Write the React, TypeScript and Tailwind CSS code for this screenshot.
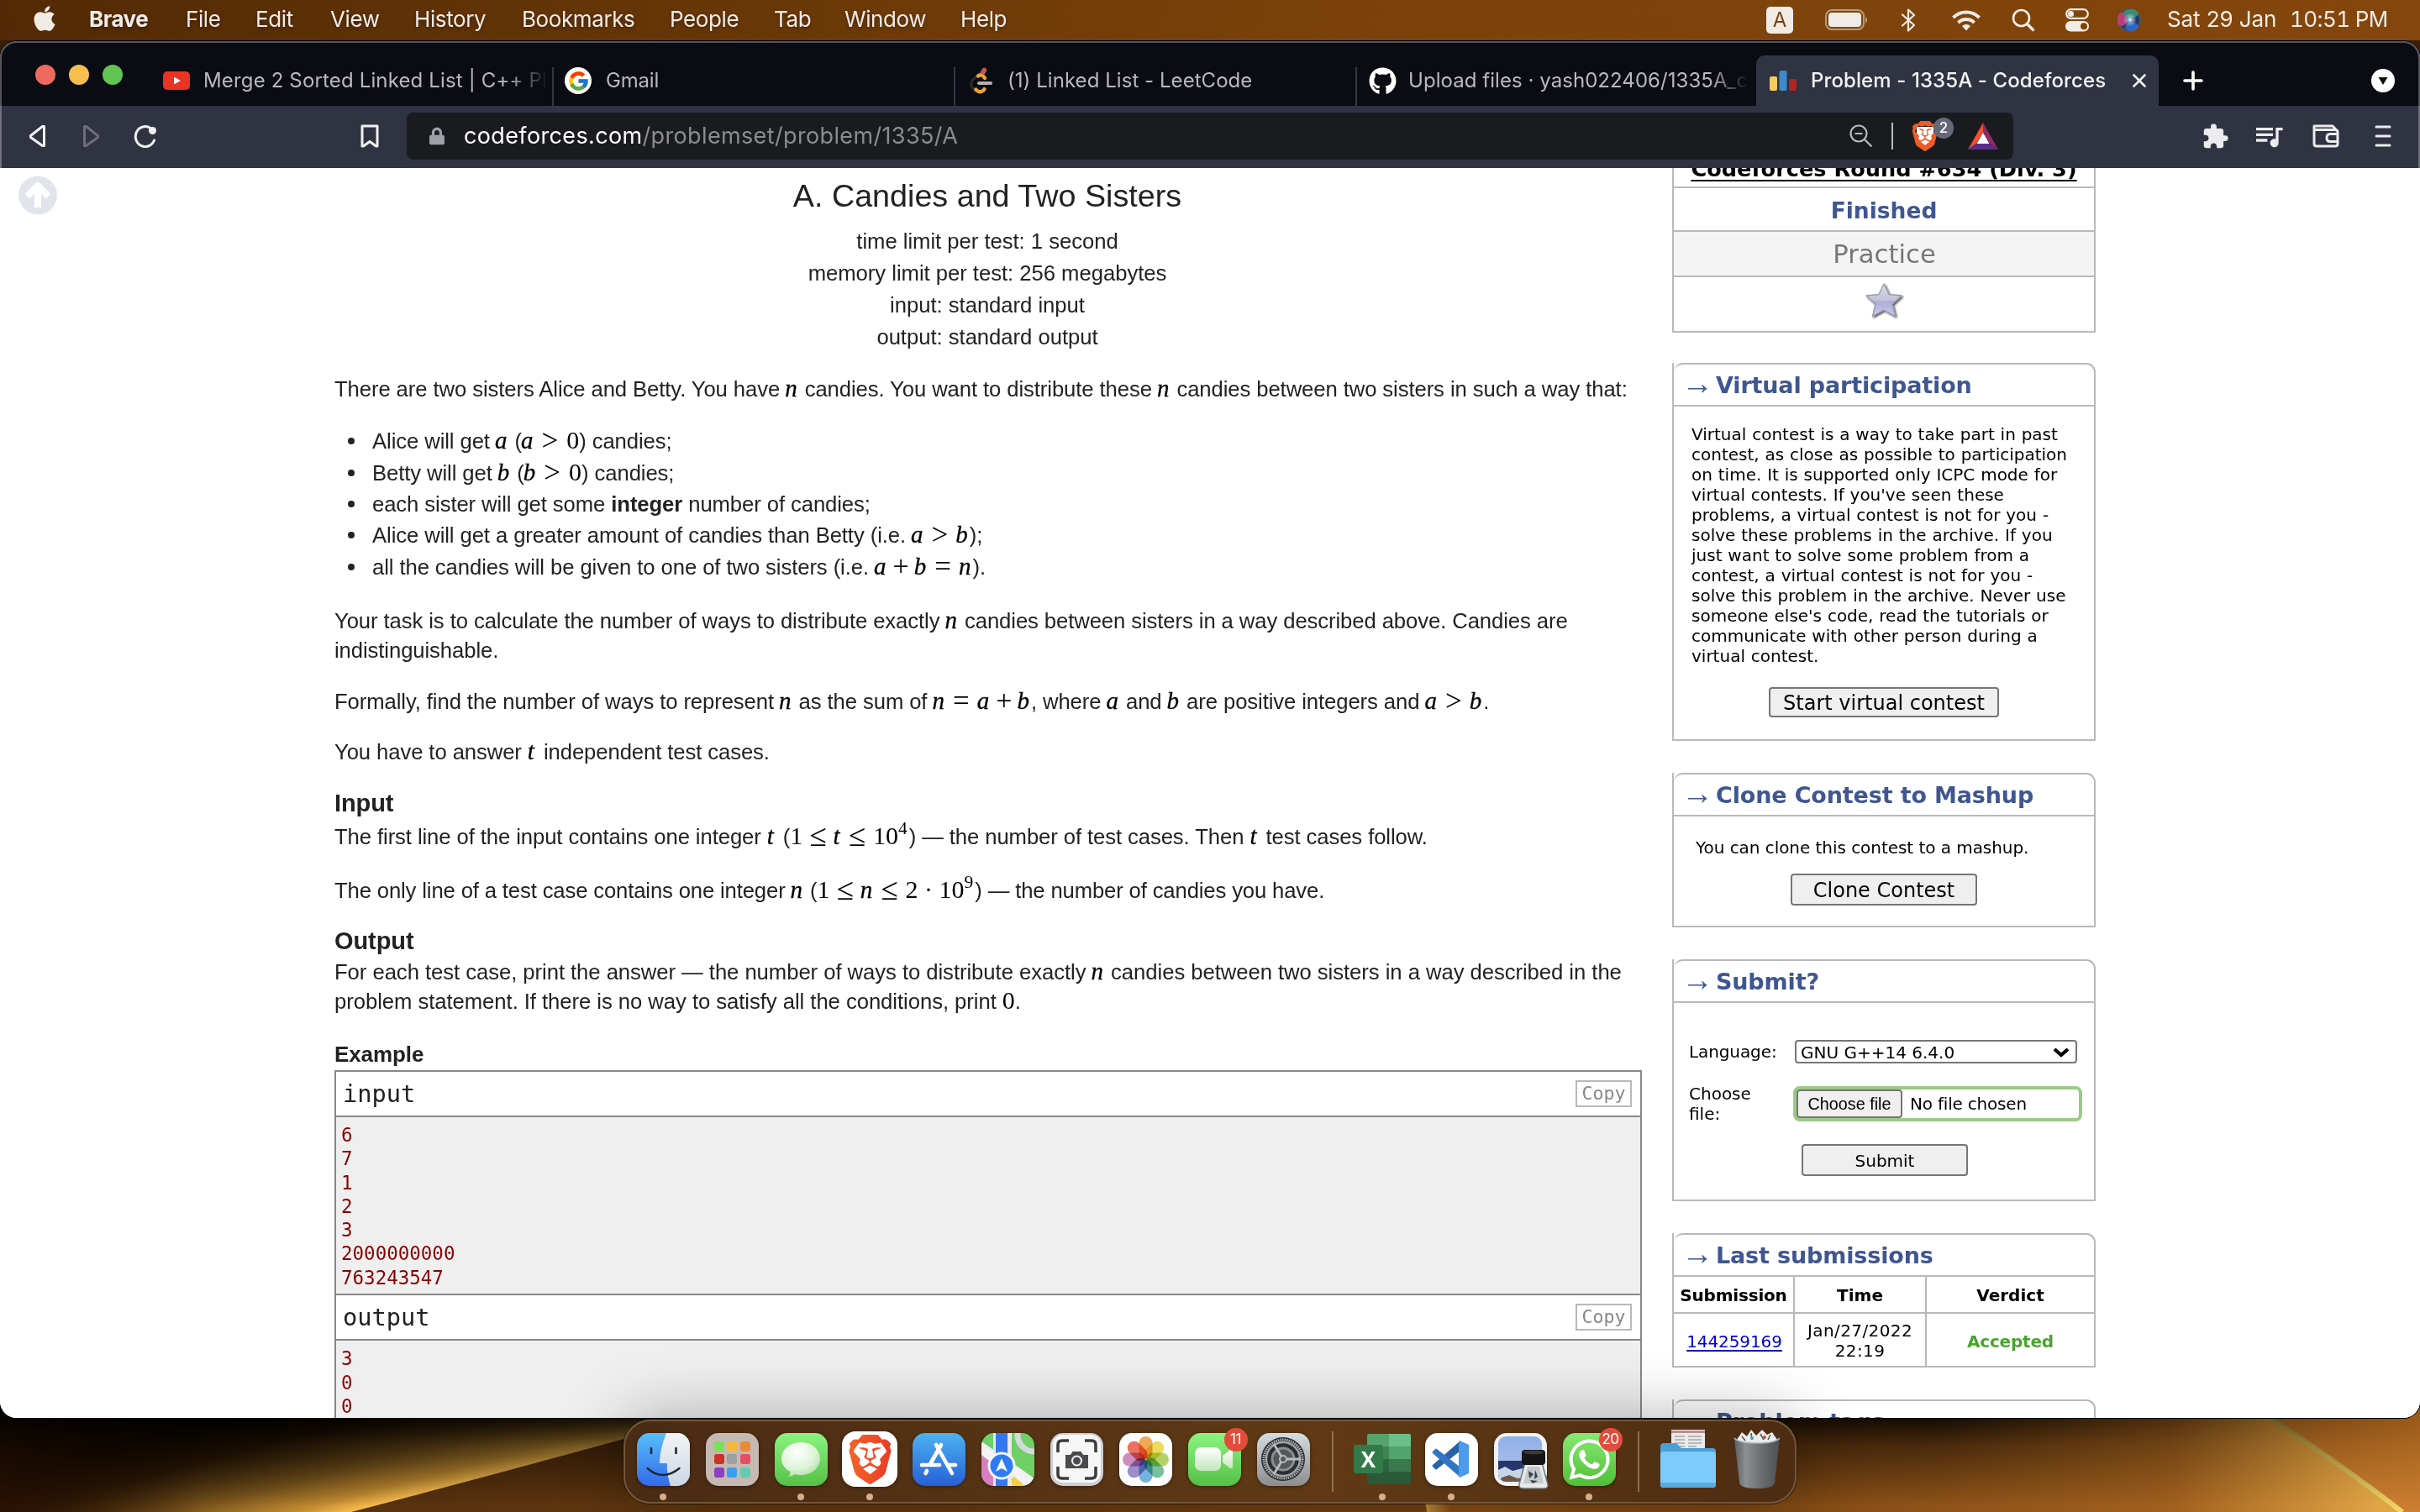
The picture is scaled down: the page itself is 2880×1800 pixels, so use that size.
import React from "react";
import { FaApple, FaGithub, FaWhatsapp, FaLock } from "react-icons/fa";
import { FcGoogle } from "react-icons/fc";
import { SiBrave } from "react-icons/si";
import { MdExtension, MdQueueMusic } from "react-icons/md";

const UI = "font-['Inter',sans-serif]";
const VERDANA = "font-['DejaVu_Sans',sans-serif]";
const MONO = "font-['DejaVu_Sans_Mono',monospace]";

/* ---------- Menu bar ---------- */

const menus = [
  { label: "Brave", cls: "w-[115px] font-bold tracking-[-0.5px]" },
  { label: "File", cls: "w-[83px]" },
  { label: "Edit", cls: "w-[89px]" },
  { label: "View", cls: "w-[100px]" },
  { label: "History", cls: "w-[128px]" },
  { label: "Bookmarks", cls: "w-[176px]" },
  { label: "People", cls: "w-[124px]" },
  { label: "Tab", cls: "w-[84px]" },
  { label: "Window", cls: "w-[138px]" },
  { label: "Help", cls: "w-[80px]" },
];

function MenuBar() {
  return (
    <div className={`relative flex h-[48px] shrink-0 items-center bg-gradient-to-r from-[#532a05] via-[#7a420a] via-55% to-[#84460c] text-[26px] text-[#f1ebe6] ${UI}`}>
      <FaApple className="mb-[4px] ml-[38px] h-[34px] w-[30px] shrink-0" />
      <div className="ml-[38px] flex pb-[3px] tracking-[-0.4px] whitespace-nowrap [text-shadow:0_2px_4px_rgba(0,0,0,0.35)]">
        {menus.map((m) => (
          <span key={m.label} className={m.cls}>{m.label}</span>
        ))}
      </div>
      <div className="ml-auto flex items-center pr-[37px]">
        <span className="flex h-[32px] w-[32px] items-center justify-center rounded-[5px] bg-[#f1ebe6] text-[24px] text-[#7a420a]">A</span>
        <svg className="ml-[38px]" width="52" height="26" viewBox="0 0 52 26">
          <rect x="1" y="1" width="45" height="23" rx="7" fill="none" stroke="#f1ebe6" strokeOpacity=".5" strokeWidth="2" />
          <rect x="4" y="4" width="39" height="17" rx="4" fill="#f1ebe6" />
          <path d="M48 9q4 3.500 0 8z" fill="#f1ebe6" fillOpacity=".6" />
        </svg>
        <svg className="ml-[38px]" width="18" height="28" viewBox="0 0 18 28" fill="none" stroke="#f1ebe6" strokeWidth="2.200" strokeLinejoin="round" strokeLinecap="round">
          <path d="M2 7.500l14 12.500-7 6.500V1.500l7 6.500L2 20.500" />
        </svg>
        <svg className="ml-[43px]" width="34" height="25" viewBox="0 0 34 25" fill="none" stroke="#f1ebe6" strokeWidth="4">
          <path d="M1.500 9a22 22 0 0 1 31 0" />
          <path d="M7.500 15a13.500 13.500 0 0 1 19 0" />
          <path d="M12 19a7 7 0 0 1 10 0l-5 5.500z" fill="#f1ebe6" stroke="none" />
        </svg>
        <svg className="ml-[37px]" width="28" height="28" viewBox="0 0 28 28" fill="none" stroke="#f1ebe6" strokeWidth="2.600" strokeLinecap="round">
          <circle cx="11.500" cy="11.500" r="9.500" />
          <path d="M18.500 18.500l7 7" strokeWidth="3.200" />
        </svg>
        <svg className="ml-[36px]" width="28" height="28" viewBox="0 0 28 28">
          <rect x="1.200" y="1.200" width="25.600" height="10.600" rx="5.300" fill="none" stroke="#f1ebe6" strokeWidth="2.200" />
          <circle cx="6.500" cy="6.500" r="3.600" fill="#f1ebe6" />
          <rect x="0" y="15" width="28" height="12.500" rx="6.200" fill="#f1ebe6" />
          <circle cx="22" cy="21.200" r="4" fill="#7f440c" />
        </svg>
        <svg className="mb-[1px] ml-[34px]" width="28" height="28" viewBox="0 0 28 28">
          <defs>
            <radialGradient id="siriBase"><stop offset="0" stopColor="#2a4a86" /><stop offset=".7" stopColor="#22305e" /><stop offset="1" stopColor="#47606f" /></radialGradient>
            <radialGradient id="siriGlow"><stop offset="0" stopColor="#fff" /><stop offset=".35" stopColor="#bfe6f5" stopOpacity=".6" /><stop offset="1" stopColor="#bfe6f5" stopOpacity="0" /></radialGradient>
            <clipPath id="siriClip"><circle cx="14" cy="14" r="14" /></clipPath>
          </defs>
          <g clipPath="url(#siriClip)">
            <circle cx="14" cy="14" r="14" fill="url(#siriBase)" />
            <ellipse cx="5" cy="13" rx="6" ry="8" fill="#d43f7d" opacity=".85" />
            <ellipse cx="16" cy="6" rx="9" ry="5" fill="#3c9a78" opacity=".85" />
            <ellipse cx="17" cy="22" rx="8" ry="5" fill="#2f6fd0" opacity=".85" />
            <circle cx="15" cy="13.500" r="8" fill="url(#siriGlow)" />
          </g>
        </svg>
        <span className="ml-[31px] w-[146px] pb-[3px] tracking-[-0.1px] whitespace-nowrap">Sat 29 Jan</span>
        <span className="w-[118px] pb-[3px] tracking-[-0.6px] whitespace-nowrap tabular-nums">10:51 PM</span>
      </div>
    </div>
  );
}

/* ---------- Browser chrome ---------- */

function TabStrip() {
  const fade = "whitespace-nowrap [mask-image:linear-gradient(to_right,black_88%,transparent)]";
  return (
    <div className={`flex h-[77px] shrink-0 items-end bg-[#0b0b14] text-[24px] text-[#b9b9bc] ${UI}`}>
      <div className="mb-[25px] ml-[42px] flex h-[24px] gap-[16px]">
        <span className="size-[24px] rounded-full bg-[#ed6a5f]" />
        <span className="size-[24px] rounded-full bg-[#f5bf4f]" />
        <span className="size-[24px] rounded-full bg-[#61c554]" />
      </div>
      <div className="ml-[48px] flex h-[60px] w-[463px] items-center">
        <svg width="32" height="24" viewBox="0 0 32 24"><rect y="1" width="32" height="22" rx="5" fill="#e93323" /><path d="M13 7.500v9l8-4.500z" fill="#fff" /></svg>
        <span className={`ml-[16px] w-[411px] tracking-[0.15px] ${fade}`}>Merge 2 Sorted Linked List | C++ Pla</span>
      </div>
      <div className="flex h-[60px] w-[478px] items-center">
        <span className="mt-[14px] h-[46px] w-[2px] bg-[#35363f]" />
        <span className="ml-[13px] flex size-[32px] items-center justify-center rounded-full bg-white"><FcGoogle size={27} /></span>
        <span className="ml-[17px] tracking-[-0.2px]">Gmail</span>
      </div>
      <div className="flex h-[60px] w-[478px] items-center">
        <span className="mt-[14px] h-[46px] w-[2px] bg-[#35363f]" />
        <svg className="ml-[16px]" width="28" height="32" viewBox="0 0 28 32" fill="none" strokeLinecap="round">
          <path d="M18 2L4 16q-3 4 0 8l4 5" stroke="#2d2c2c" strokeWidth="3" />
          <path d="M11 10.500q4-3 7 1l1 1.500M8.500 26.500q4 5 9 1l1-1.500" stroke="#e9a33b" strokeWidth="4.200" />
          <path d="M18.500 3.500l-1.500 2.500" stroke="#c85749" strokeWidth="5.500" />
          <path d="M12 19h14" stroke="#b3b1b0" strokeWidth="4" />
        </svg>
        <span className="ml-[18px] whitespace-nowrap tracking-[0.05px]">(1) Linked List - LeetCode</span>
      </div>
      <div className="flex h-[60px] w-[477px] items-center">
        <span className="mt-[14px] h-[46px] w-[2px] bg-[#35363f]" />
        <FaGithub className="ml-[14px] size-[33px] text-white" />
        <span className={`ml-[14px] w-[406px] tracking-[0.05px] ${fade}`}>Upload files · yash022406/1335A_c</span>
      </div>
      <div className="flex h-[60px] w-[479px] items-center rounded-t-[10px] bg-[#303342] text-[#f3f3f4]">
        <svg className="ml-[16px]" width="32" height="26" viewBox="0 0 32 26">
          <rect x="0" y="8" width="9" height="17" rx="2" fill="#f3cd62" />
          <rect x="11.500" y="1" width="9" height="24" rx="2" fill="#3f8acb" />
          <rect x="23" y="11" width="9" height="14" rx="2" fill="#ad2624" />
        </svg>
        <span className="ml-[17px] w-[366px] font-medium tracking-[0.1px] whitespace-nowrap">Problem - 1335A - Codeforces</span>
        <svg className="ml-[17px]" width="16" height="16" viewBox="0 0 16 16" stroke="#f3f3f4" strokeWidth="2.600" strokeLinecap="round"><path d="M1.500 1.500l13 13M14.500 1.500l-13 13" /></svg>
      </div>
      <svg className="mb-[18px] ml-[29px]" width="24" height="24" viewBox="0 0 24 24" stroke="#fff" strokeWidth="3.600" strokeLinecap="round"><path d="M12 2v20M2 12h20" /></svg>
      <svg className="mb-[16px] ml-[200px]" width="28" height="28" viewBox="0 0 28 28"><circle cx="14" cy="14" r="14" fill="#fff" /><path d="M8.500 10h11L14 19z" fill="#0b0b14" /></svg>
    </div>
  );
}

function Toolbar() {
  return (
    <div className={`flex h-[74px] shrink-0 items-center bg-[#303342] pb-[2px] ${UI}`}>
      <svg className="ml-[34px]" width="21" height="28" viewBox="0 0 21 28" fill="none" stroke="#f0f0f2" strokeWidth="3" strokeLinejoin="round"><path d="M18.500 2.500v23h-2L2.500 15.500v-2L16.500 2.500z" /></svg>
      <svg className="ml-[43px]" width="21" height="28" viewBox="0 0 21 28" fill="none" stroke="#6b6d77" strokeWidth="3" strokeLinejoin="round"><path d="M2.500 2.500v23h2l14-10v-2L4.500 2.500z" /></svg>
      <svg className="ml-[39px]" width="30" height="28" viewBox="0 0 30 28" fill="none" stroke="#f0f0f2" strokeWidth="3" strokeLinecap="round"><path d="M21 4.500A11.500 12 0 1 0 25.500 19" /><circle cx="23.500" cy="7.500" r="4.500" fill="#f0f0f2" stroke="none" /></svg>
      <svg className="ml-[241px]" width="22" height="28" viewBox="0 0 22 28" fill="none" stroke="#f0f0f2" strokeWidth="3" strokeLinejoin="round"><path d="M2 2h18v24h-1.500L11 20.500 3.500 26H2z" /></svg>
      <div className="ml-[33px] flex h-[56px] w-[1912px] items-center rounded-[8px] bg-[#1a1b1f]">
        <FaLock className="ml-[27px] h-[22px] w-[18px] text-[#9aa0a6]" />
        <span className="ml-[23px] pt-[1px] text-[27px] tracking-[0.36px] whitespace-nowrap text-[#8b8c90]">
          <span className="text-white">codeforces.com</span>/problemset/problem/1335/A
        </span>
        <svg className="mr-[22px] ml-auto" width="28" height="28" viewBox="0 0 28 28" fill="none" stroke="#b9babd" strokeWidth="2.200"><circle cx="11" cy="11" r="9.500" /><path d="M6.500 11h9M18 18l8.500 8.500" /></svg>
        <span className="h-[32px] w-[2px] bg-[#b9babd]" />
        <div className="relative ml-[22px] flex h-[38px] w-[32px] items-center justify-center">
          <span className="absolute h-[22px] w-[20px] bg-white" />
          <SiBrave className="relative h-[36px] w-[36px] shrink-0 text-[#ef5b27]" />
          <span className="absolute -top-[3px] -right-[18px] flex h-[25px] w-[24px] items-center justify-center rounded-full bg-[#656977] text-[17px] font-medium text-white">2</span>
        </div>
        <svg className="mr-[18px] ml-[35px]" width="36" height="32" viewBox="0 0 36 32">
          <path d="M18 0v12l-8 13L0 32z" fill="#f0502f" />
          <path d="M18 0l18 32-10-7-8-13z" fill="#8f2a62" />
          <path d="M0 32l10-7h16l10 7z" fill="#5a2d88" />
          <path d="M18 12l7.500 13h-15z" fill="#fff" />
        </svg>
      </div>
      <MdExtension className="ml-[224px] size-[33px] text-[#ececee]" />
      <MdQueueMusic className="ml-[27px] size-[40px] text-[#ececee]" />
      <svg className="ml-[32px]" width="32" height="28" viewBox="0 0 32 28" fill="none" stroke="#ececee" strokeWidth="3" strokeLinejoin="round">
        <path d="M2 2h22l4 4.500H2zM2 3v20q0 3 3 3h22q3 0 3-3V9.500q0-3-3-3" />
        <path d="M30 11.500h-9q-4 0-4 4.500t4 4.500h9" />
      </svg>
      <svg className="ml-[42px]" width="20" height="26" viewBox="0 0 20 26" stroke="#ececee" strokeWidth="3" strokeLinecap="round"><path d="M2 2h16M2 13h16M2 24h16" /></svg>
    </div>
  );
}

/* ---------- Problem statement ---------- */

const SERIF = "font-['Liberation_Serif',serif] leading-[0] tracking-normal text-black";

/* Upright digits */
function M({ children }: { children: React.ReactNode }) {
  return <span className={`text-[30px] ${SERIF}`}>{children}</span>;
}
/* Italic variable */
function V({ children }: { children: React.ReactNode }) {
  return <i className={`mr-[2px] -ml-[1px] text-[29px] [-webkit-text-stroke:0.3px_black] ${SERIF}`}>{children}</i>;
}
function T() {
  return <i className={`mr-[4px] text-[29px] [-webkit-text-stroke:0.3px_black] ${SERIF}`}>t</i>;
}
/* Relation sign */
function Op({ children }: { children: React.ReactNode }) {
  return <span className={`relative top-[2px] mr-[10px] ml-[8px] text-[35px] ${SERIF}`}>{children}</span>;
}
function Le() {
  return <span className={`relative top-[2px] mr-[9px] ml-[8px] text-[37px] ${SERIF}`}>≤</span>;
}
function Plus() {
  return <span className={`relative top-[1px] mr-[7px] ml-[6px] text-[34px] ${SERIF}`}>+</span>;
}
function Sup({ children }: { children: React.ReactNode }) {
  return <span className={`relative -top-[12px] mr-[2px] text-[21.500px] ${SERIF}`}>{children}</span>;
}

function Bullet({ children, short }: { children: React.ReactNode; short?: boolean }) {
  return (
    <li className={`flex items-center ${short ? "h-[36px] leading-[34px]" : "h-[38px] leading-[38px]"}`}>
      <span className="mr-[21px] ml-[16px] size-[8px] rounded-full bg-[#222]" />
      <span>{children}</span>
    </li>
  );
}

function SampleHead({ children }: { children: React.ReactNode }) {
  return (
    <div className="flex h-[52px] items-center justify-between pr-[10px] pl-[8px]">
      <span className="pt-[2px] text-[28.700px] text-[#222]">{children}</span>
      <span className="flex h-[32px] w-[67px] items-center justify-center border-2 border-[#b9b9b9] text-[21.500px] text-[#888]">Copy</span>
    </div>
  );
}

function Problem() {
  return (
    <main className="w-[1556px] shrink-0 pt-[10px] font-['Liberation_Sans',sans-serif] text-[25.670px] tracking-[-0.09px] whitespace-nowrap text-[#222]">
      <header className="flex flex-col items-center pr-[2px]">
        <h1 className="text-[37.700px] leading-[46px] tracking-normal">A. Candies and Two Sisters</h1>
        <div className="mt-[12px] text-center leading-[38px] tracking-[-0.03px]">
          <p>time limit per test: 1 second</p>
          <p>memory limit per test: 256 megabytes</p>
          <p>input: standard input</p>
          <p>output: standard output</p>
        </div>
      </header>
      <p className="mt-[26px] leading-[34px]">
        There are two sisters Alice and Betty. You have <V>n</V> candies. You want to distribute these <V>n</V> candies between two sisters in such a way that:
      </p>
      <ul className="mt-[26px]">
        <Bullet>Alice will get <V>a</V> (<V>a</V><Op>&gt;</Op><M>0</M>) candies;</Bullet>
        <Bullet>Betty will get <V>b</V> (<V>b</V><Op>&gt;</Op><M>0</M>) candies;</Bullet>
        <Bullet short>each sister will get some <b>integer</b> number of candies;</Bullet>
        <Bullet>Alice will get a greater amount of candies than Betty (i.e. <V>a</V><Op>&gt;</Op><V>b</V>);</Bullet>
        <Bullet>all the candies will be given to one of two sisters (i.e. <V>a</V><Plus /><V>b</V><Op>=</Op><V>n</V>).</Bullet>
      </ul>
      <p className="mt-[28px] leading-[35px]">
        Your task is to calculate the number of ways to distribute exactly <V>n</V> candies between sisters in a way described above. Candies are<br />indistinguishable.
      </p>
      <p className="mt-[26px] leading-[34px]">
        Formally, find the number of ways to represent <V>n</V> as the sum of <V>n</V><Op>=</Op><V>a</V><Plus /><V>b</V>, where <V>a</V> and <V>b</V> are positive integers and <V>a</V><Op>&gt;</Op><V>b</V>.
      </p>
      <p className="mt-[26px] leading-[34px]">You have to answer <T /> independent test cases.</p>
      <h2 className="mt-[27px] text-[29px] leading-[34px] font-bold">Input</h2>
      <p className="mt-[6px] leading-[34px]">
        The first line of the input contains one integer <T /> (<M>1</M><Le /><V>t</V><Le /><M>10</M><Sup>4</Sup>) — the number of test cases. Then <T /> test cases follow.
      </p>
      <p className="mt-[30px] leading-[34px] tracking-[-0.14px]">
        The only line of a test case contains one integer <V>n</V> (<M>1</M><Le /><V>n</V><Le /><M>2 · 10</M><Sup>9</Sup>) — the number of candies you have.
      </p>
      <h2 className="mt-[26px] text-[29px] leading-[34px] font-bold">Output</h2>
      <p className="mt-[3px] leading-[35px] tracking-[-0.05px]">
        For each test case, print the answer — the number of ways to distribute exactly <V>n</V> candies between two sisters in a way described in the<br />
        problem statement. If there is no way to satisfy all the conditions, print <M>0</M>.
      </p>
      <h3 className="mt-[28px] text-[26px] leading-[34px] font-bold">Example</h3>
      <div className={`mt-[2px] border-2 border-[#888] tracking-normal ${MONO}`}>
        <SampleHead>input</SampleHead>
        <pre className={`h-[214px] border-y-2 border-[#888] bg-[#efefef] pt-[7px] pl-[6px] text-[22.500px] leading-[28.300px] text-[#880000] ${MONO}`}>{"6\n7\n1\n2\n3\n2000000000\n763243547"}</pre>
        <SampleHead>output</SampleHead>
        <pre className={`h-[213px] border-t-2 border-[#888] bg-[#efefef] pt-[7px] pl-[6px] text-[22.500px] leading-[28.700px] text-[#880000] ${MONO}`}>{"3\n0\n0"}</pre>
      </div>
    </main>
  );
}

/* ---------- Sidebar ---------- */

function Box({ title, children }: { title: string; children?: React.ReactNode }) {
  return (
    <section className="mt-[38px] border-b-2 border-l-2 border-[#b9b9b9] first:mt-0">
      <div className="rounded-t-[11px] border-t-2 border-r-2 border-[#b9b9b9]">
        <h2 className="flex h-[48px] items-center pl-[9px] text-[27px] font-bold whitespace-nowrap text-[#3f5690]">
          <span className="w-[41px] pb-[4px] font-['Liberation_Serif',serif] text-[38px] leading-none font-normal">→</span>
          <span className="pt-[2px] tracking-[-0.15px]">{title}</span>
        </h2>
      </div>
      <div className="border-t-2 border-r-2 border-[#b9b9b9]">{children}</div>
    </section>
  );
}

function Button({ className, children }: { className: string; children: React.ReactNode }) {
  return <button className={`block rounded-[4px] border-2 border-[#767676] bg-[#efefef] pt-[2px] leading-none text-black ${className}`}>{children}</button>;
}

const blurb = [
  "Virtual contest is a way to take part in past",
  "contest, as close as possible to participation",
  "on time. It is supported only ICPC mode for",
  "virtual contests. If you've seen these",
  "problems, a virtual contest is not for you -",
  "solve these problems in the archive. If you",
  "just want to solve some problem from a",
  "contest, a virtual contest is not for you -",
  "solve this problem in the archive. Never use",
  "someone else's code, read the tutorials or",
  "communicate with other person during a",
  "virtual contest.",
];

function Sidebar() {
  return (
    <aside className={`ml-[36px] w-[504px] shrink-0 text-[20px] leading-[24px] text-black ${VERDANA}`}>
      <div className="border-x-2 border-b-2 border-[#b9b9b9] text-center whitespace-nowrap">
        <p className="h-[22px] text-[25.600px] leading-[2px] font-bold underline decoration-2 underline-offset-[4px]">Codeforces Round #634 (Div. 3)</p>
        <p className="border-t-2 border-[#b9b9b9] pt-[4px] text-[26.500px] leading-[46px] font-bold text-[#3f5690]">Finished</p>
        <p className="border-y-2 border-[#b9b9b9] bg-[#f4f4f4] pt-[2px] pl-[1px] text-[30.700px] leading-[50px] text-[#777]">Practice</p>
        <div className="flex h-[64px] justify-center pt-[5px] pl-[1px]">
          <svg width="46" height="48" viewBox="0 0 46 48">
            <defs>
              <linearGradient id="star" x1="0" y1="0" x2="0" y2="1"><stop offset="0" stopColor="#dcdce6" /><stop offset=".5" stopColor="#c2c2da" /><stop offset=".55" stopColor="#adadd6" /><stop offset="1" stopColor="#c9c9f0" /></linearGradient>
              <filter id="starShadow"><feDropShadow dx="1.500" dy="1.500" stdDeviation="1.200" floodColor="#000" floodOpacity=".7" /></filter>
            </defs>
            <path d="M22 3l6 12.500 15 1.500-11 10 3.500 14.500L22 34l-13.500 7.500L12 27 1 17l15-1.500z" fill="url(#star)" stroke="#9a9aac" strokeWidth="1.400" strokeLinejoin="round" filter="url(#starShadow)" />
          </svg>
        </div>
      </div>
      <div className="h-[36px]" />
      <div>
        <Box title="Virtual participation">
          <div className="h-[396px] px-[21px] pt-[21px] whitespace-nowrap">
            <div className="[word-spacing:0.5px]">{blurb.map((l) => <p key={l}>{l}</p>)}</div>
            <Button className="mx-auto mt-[25px] h-[36px] w-[274px] text-[24px]">Start virtual contest</Button>
          </div>
        </Box>
        <Box title="Clone Contest to Mashup">
          <div className="h-[130px] pt-[25px]">
            <p className="pl-[26px] tracking-[-0.05px] whitespace-nowrap">You can clone this contest to a mashup.</p>
            <Button className="mx-auto mt-[19px] h-[38px] w-[222px] text-[24px]">Clone Contest</Button>
          </div>
        </Box>
        <Box title="Submit?">
          <div className="h-[234px] pt-[44px] pl-[18px]">
            <div className="flex h-[28px] items-center">
              <span className="w-[126px] tracking-[-0.1px]">Language:</span>
              <span className="flex h-[28px] w-[336px] items-center justify-between rounded-[4px] border-2 border-[#767676] bg-white pt-[1px] pr-[7px] pl-[5px]">
                GNU G++14 6.4.0
                <svg width="20" height="14" viewBox="0 0 20 14" fill="none" stroke="#000" strokeWidth="4.200"><path d="M2 3l8 7 8-7" /></svg>
              </span>
            </div>
            <div className="mt-[24px] flex h-[48px] items-center">
              <span className="w-[124px]">Choose<br />file:</span>
              <span className="flex h-[42px] w-[344px] items-center rounded-[8px] border-4 border-[#9cc986] whitespace-nowrap">
                <Button className="h-[34px] w-[126px] shrink-0 font-['Liberation_Sans',sans-serif] text-[19.800px]">Choose file</Button>
                <span className="ml-[9px] tracking-[-0.2px]">No file chosen</span>
              </span>
            </div>
            <Button className="mt-[24px] ml-[134px] h-[38px] w-[198px] text-[20px]">Submit</Button>
          </div>
        </Box>
        <Box title="Last submissions">
          <div className="grid grid-cols-[144px_157px_1fr] text-center">
            <div className="flex h-[42px] items-center justify-center border-r-2 border-[#b9b9b9] pt-[2px] font-bold tracking-[-0.2px]">Submission</div>
            <div className="flex items-center justify-center border-r-2 border-[#b9b9b9] pt-[2px] font-bold">Time</div>
            <div className="flex items-center justify-center pt-[2px] font-bold">Verdict</div>
            <div className="flex h-[64px] items-center justify-center border-t-2 border-r-2 border-[#b9b9b9] pt-[3px] pl-[2px] tracking-[-0.1px] text-[#0000cc] underline decoration-2 underline-offset-[3px]">144259169</div>
            <div className="flex items-center justify-center border-t-2 border-r-2 border-[#b9b9b9] pt-[2px] tracking-[0.4px]">Jan/27/2022<br />22:19</div>
            <div className="flex items-center justify-center border-t-2 border-[#b9b9b9] pt-[3px] font-bold tracking-[-0.2px] text-[#4aa52e]">Accepted</div>
          </div>
        </Box>
        <Box title="Problem tags" />
      </div>
    </aside>
  );
}

/* ---------- Wallpaper ---------- */

function Wallpaper() {
  return (
    <svg className="absolute bottom-0 left-0" width="2880" height="160" viewBox="0 0 2880 160" preserveAspectRatio="none">
      <defs>
        <linearGradient id="wLeft" gradientUnits="userSpaceOnUse" x1="379" y1="15" x2="418" y2="160">
          <stop offset="0" stopColor="#120900" /><stop offset=".3" stopColor="#2e1b06" /><stop offset=".65" stopColor="#7a551c" /><stop offset=".88" stopColor="#c08a30" /><stop offset="1" stopColor="#f9bd4c" />
        </linearGradient>
        <linearGradient id="wEdge" x1="0" y1="0" x2="1" y2="0"><stop offset="0" stopColor="#2a1204" /><stop offset="1" stopColor="#2a1204" stopOpacity="0" /></linearGradient>
        <linearGradient id="wMid" x1="0" y1="0" x2="1" y2="0"><stop offset="0" stopColor="#4f2c0d" /><stop offset=".5" stopColor="#6d3f12" /><stop offset="1" stopColor="#8a5219" /></linearGradient>
        <linearGradient id="wRight" gradientUnits="userSpaceOnUse" x1="1690" y1="0" x2="2880" y2="0"><stop offset="0" stopColor="#d6a44a" /><stop offset=".03" stopColor="#8a4f17" /><stop offset=".3" stopColor="#7e4714" /><stop offset=".75" stopColor="#a0601e" /><stop offset=".96" stopColor="#e0a545" /></linearGradient>
        <linearGradient id="wRidge" x1="0" y1="0" x2="0" y2="1"><stop offset=".25" stopColor="#8d8238" stopOpacity=".7" /><stop offset="1" stopColor="#f5d868" /></linearGradient>
        <linearGradient id="wFar" x1="0" y1="0" x2="0" y2="1"><stop offset=".3" stopColor="#b0691f" /><stop offset="1" stopColor="#cd7f33" /></linearGradient>
        <linearGradient id="wShade" x1="0" y1="0" x2="0" y2="1"><stop offset=".28" stopColor="#000" stopOpacity=".9" /><stop offset=".5" stopColor="#000" stopOpacity=".5" /><stop offset=".95" stopColor="#000" stopOpacity="0" /></linearGradient>
        <linearGradient id="wShadeX" x1="0" y1="0" x2="1" y2="0"><stop offset="0" stopColor="#fff" /><stop offset=".8" stopColor="#fff" /><stop offset=".92" stopColor="#fff" stopOpacity=".5" /><stop offset="1" stopColor="#fff" stopOpacity=".15" /></linearGradient>
        <mask id="wMask"><rect width="2880" height="160" fill="url(#wShadeX)" /></mask>
      </defs>
      <rect width="2880" height="160" fill="url(#wMid)" />
      <path d="M0 0H1000Q740 76 418 160H0z" fill="url(#wLeft)" />
      <rect width="240" height="160" fill="url(#wEdge)" />
      <path d="M1675 0L1698 160H2880V0z" fill="url(#wRight)" />
      <path d="M2625 0Q2745 72 2859 160H2880V0z" fill="url(#wFar)" />
      <path d="M2625 0Q2745 72 2859 160" fill="none" stroke="url(#wRidge)" strokeWidth="6" />
      <rect width="2880" height="160" fill="url(#wShade)" mask="url(#wMask)" />
    </svg>
  );
}

/* ---------- Dock ---------- */

const tile = "relative flex size-[63px] items-center justify-center overflow-hidden rounded-[15px] shadow-[0_1px_4px_rgba(0,0,0,0.4)]";

function Finder() {
  return (
    <span className={tile}>
      <svg width="63" height="63" viewBox="0 0 63 63">
        <defs><linearGradient id="fB" x1="0" y1="0" x2="0" y2="1"><stop offset="0" stopColor="#57c0f9" /><stop offset="1" stopColor="#3469ea" /></linearGradient><linearGradient id="fW" x1="0" y1="0" x2="0" y2="1"><stop offset="0" stopColor="#f4f4f6" /><stop offset="1" stopColor="#ccd7e4" /></linearGradient></defs>
        <rect width="63" height="63" fill="url(#fB)" />
        <path d="M35 0Q27 20 27 36h9q-1 12 4 27h23V0z" fill="url(#fW)" />
        <path d="M17 18v6M46.500 18v6" stroke="#1c2836" strokeWidth="2.600" strokeLinecap="round" />
        <path d="M12.500 42q18 16 38 0" fill="none" stroke="#1c2836" strokeWidth="2.400" strokeLinecap="round" />
      </svg>
    </span>
  );
}

const padColors = ["bg-[#7be05a]", "bg-[#f6b73c]", "bg-[#ea8a34]", "bg-[#cf3126]", "bg-[#9aa0a3]", "bg-[#ea4c62]", "bg-[#8b3fc4]", "bg-[#3b9cf0]", "bg-[#64cbb0]"];
function Launchpad() {
  return (
    <span className={`${tile} bg-[#c5b9b1]`}>
      <span className="grid grid-cols-3 gap-[3.500px]">
        {padColors.map((c) => <span key={c} className={`size-[12px] rounded-[3px] ${c}`} />)}
      </span>
    </span>
  );
}

function Messages() {
  return (
    <span className={`${tile} bg-gradient-to-b from-[#8af480] to-[#56c046]`}>
      <svg width="50" height="46" viewBox="0 0 50 46">
        <defs><radialGradient id="msg" cx=".4" cy=".3" r=".8"><stop offset="0" stopColor="#fff" /><stop offset=".6" stopColor="#dcf3d6" /><stop offset="1" stopColor="#a8d89c" /></radialGradient></defs>
        <path d="M25 3c13 0 23 8.500 23 19.500S38 42 25 42q-4 0-7-1-4 3-8 3 3-3 2.500-6C6 35 2 29 2 22.500 2 11.500 12 3 25 3z" fill="url(#msg)" />
      </svg>
    </span>
  );
}

function BraveApp() {
  return (
    <span className="relative flex size-[66px] items-center justify-center rounded-[16px] bg-white shadow-[0_1px_4px_rgba(0,0,0,0.4)]">
      <svg width="0" height="0" className="absolute"><defs><linearGradient id="bGrad"><stop offset="0" stopColor="#f0652a" /><stop offset=".5" stopColor="#f0502a" /><stop offset="1" stopColor="#ea3a23" /></linearGradient></defs></svg>
      <SiBrave className="size-[59px] [&_path]:fill-[url(#bGrad)]" />
    </span>
  );
}

function AppStore() {
  return (
    <span className={`${tile} bg-gradient-to-b from-[#4fb1f0] to-[#2a5fd6]`}>
      <svg width="50" height="50" viewBox="0 0 50 50" fill="none" stroke="#fff" strokeWidth="4.600" strokeLinecap="round">
        <path d="M5 32h21M36 32h9M28 8L15 31M22 8l19 34M11 39l-1.500 3" />
      </svg>
    </span>
  );
}

function Maps() {
  return (
    <span className={tile}>
      <svg width="63" height="63" viewBox="0 0 63 63">
        <rect width="63" height="63" fill="#6fd068" />
        <path d="M0 63V26l20 10v27z" fill="#d77fc0" />
        <path d="M0 10l63 44v9H48L0 26z" fill="#f2f2f4" />
        <path d="M34 63l4-12 14 12z" fill="#f5cf44" />
        <path d="M14 0h22v63H14z" fill="#e8e9ee" />
        <path d="M17 0h14v63H17z" fill="#3478f0" />
        <circle cx="63" cy="2" r="20" fill="none" stroke="#d5d8dc" strokeWidth="7" />
        <circle cx="24" cy="39" r="16.500" fill="#f5f5f7" />
        <circle cx="24" cy="39" r="13.500" fill="#2f7bf6" />
        <path d="M24 30l7 16-7-4-7 4z" fill="#fff" />
      </svg>
    </span>
  );
}

function Screenshot() {
  return (
    <span className={`${tile} bg-[#cfcfd2]`}>
      <svg width="63" height="63" viewBox="0 0 63 63" fill="none" stroke="#3d3d40" strokeWidth="3.600">
        <rect x="3" y="2" width="57" height="57" rx="12" fill="#f6f6f7" stroke="none" />
        <path d="M9 23v-9q0-5 5-5h8M41 9h8q5 0 5 5v9M54 40v9q0 5-5 5h-8M22 54h-8q-5 0-5-5v-9" />
        <path d="M18 26h6l2.500-4h10l2.500 4h6v16H18z" fill="#4b4b4e" stroke="none" />
        <circle cx="31.500" cy="33" r="5.500" stroke="#f6f6f7" strokeWidth="2" />
      </svg>
    </span>
  );
}

const petals = [
  { c: "#f09a37", a: 0 }, { c: "#ecd93f", a: 45 }, { c: "#a9ce4c", a: 90 }, { c: "#62b78e", a: 135 },
  { c: "#5fa6dc", a: 180 }, { c: "#8a7cc4", a: 225 }, { c: "#c47bb0", a: 270 }, { c: "#ea5a48", a: 315 },
];
function Photos() {
  return (
    <span className={`${tile} bg-[#fdfdfd]`}>
      <svg width="63" height="63" viewBox="0 0 63 63">
        {petals.map((p) => (
          <rect key={p.a} x="23.500" y="4" width="16" height="27" rx="8" fill={p.c} opacity=".85" transform={`rotate(${p.a} 31.500 31.500)`} className="mix-blend-multiply" />
        ))}
      </svg>
    </span>
  );
}

function Badge({ children }: { children: React.ReactNode }) {
  return <span className={`absolute -top-[6px] -right-[8px] z-10 flex size-[28px] items-center justify-center rounded-full bg-[#e34c3c] text-[17px] tracking-[-0.5px] text-white ${UI}`}>{children}</span>;
}

function FaceTime() {
  return (
    <span className="relative">
      <span className={`${tile} bg-gradient-to-b from-[#8af480] to-[#56c046]`}>
        <svg width="48" height="30" viewBox="0 0 48 30">
          <defs><linearGradient id="ft" x1="0" y1="0" x2="0" y2="1"><stop offset="0" stopColor="#fff" /><stop offset="1" stopColor="#c3e6bd" /></linearGradient></defs>
          <rect x="1" y="1" width="31" height="28" rx="7" fill="url(#ft)" /><path d="M34 11l9-7q3-1 3 2v18q0 3-3 2l-9-7z" fill="url(#ft)" />
        </svg>
      </span>
      <Badge>11</Badge>
    </span>
  );
}

function Settings() {
  return (
    <span className={`${tile} bg-gradient-to-b from-[#d5dde3] to-[#8d8d8f]`}>
      <svg width="56" height="56" viewBox="0 0 56 56" fill="none">
        <circle cx="28" cy="28" r="26" fill="#2c2e30" />
        <circle cx="28" cy="28" r="23" stroke="#b5b7b9" strokeWidth="3" strokeDasharray="1.500 1.100" />
        <circle cx="28" cy="28" r="20" stroke="#a3a5a7" strokeWidth="2.400" />
        <circle cx="28" cy="28" r="13" fill="#55585a" stroke="#8b8d8f" strokeWidth="3" />
        <circle cx="28" cy="28" r="4" stroke="#b5b7b9" strokeWidth="2" />
        <path d="M31 28h18M26 25L17 10M26 31l-9 15" stroke="#b9bbbd" strokeWidth="2.800" />
      </svg>
    </span>
  );
}

function Excel() {
  return (
    <span className="relative flex h-[62px] w-[70px]">
      <svg width="70" height="62" viewBox="0 0 70 62">
        <rect x="17" y="1" width="52" height="60" rx="2" fill="#2a5a38" />
        <path d="M17 3q0-2 2-2h24v15H17z" fill="#55a36d" /><path d="M43 1h24q2 0 2 2v13H43z" fill="#6ac089" />
        <path d="M17 16h26v15H17z" fill="#3f8553" /><path d="M43 16h26v15H43z" fill="#55a36d" />
        <path d="M17 31h26v15H17z" fill="#2d6640" /><path d="M43 31h26v15H43z" fill="#3a7a4c" />
        <rect x="1" y="14" width="35" height="34" rx="3" fill="#327a48" />
      </svg>
      <span className="absolute top-[14px] left-[1px] w-[35px] text-center font-['Open_Sans',sans-serif] text-[26px] leading-[34px] font-bold text-white">X</span>
    </span>
  );
}

function VSCode() {
  return (
    <span className={`${tile} bg-white`}>
      <svg width="46" height="46" viewBox="0 0 46 46">
        <path d="M33 2L1 30q-1 1 0 2l3 3q1 1 2 0L33 14z" fill="#2a63a8" />
        <path d="M33 44L1 16q-1-1 0-2l3-3q1-1 2 0l27 21z" fill="#3276c3" />
        <path d="M33 1l11 5v34l-11 5q-1-1-1-2V3q0-1 1-2z" fill="#4a9bea" />
      </svg>
    </span>
  );
}

function Preview() {
  return (
    <span className="relative">
      <span className={`${tile} bg-[#f3f1ef]`}>
        <svg width="52" height="54" viewBox="0 0 52 54">
          <defs><clipPath id="pv"><rect width="52" height="54" rx="9" /></clipPath><linearGradient id="pvSky" x1="0" y1="0" x2="0" y2="1"><stop offset="0" stopColor="#8fb0e8" /><stop offset="1" stopColor="#b5c4ea" /></linearGradient></defs>
          <g clipPath="url(#pv)">
            <rect width="52" height="54" fill="url(#pvSky)" /><rect y="29" width="52" height="25" fill="#27366b" />
            <path d="M0 40l8-4 9 5 12-3 14 6 9-2v12H0z" fill="#c7d6e6" /><path d="M4 49l9-3 10 4 6-1 6 6H2z" fill="#6b5a4c" />
          </g>
        </svg>
      </span>
      <svg className="absolute -right-[3px] -bottom-[4px]" width="38" height="48" viewBox="0 0 38 48">
        <path d="M9 16h20l7 26q1 5-5 5H7q-6 0-5-5z" fill="#e6e8ea" stroke="#6e7072" strokeWidth="1.400" /><path d="M12 21h14l5 20H7z" fill="#c3cacf" />
        <path d="M13 26l6 4-5 5zM21 25l3 8-4 3zM15 37l9 1-6 3z" fill="#3c4247" />
        <rect x="5" y="1" width="28" height="18" rx="4" fill="#141414" /><ellipse cx="19" cy="4" rx="12" ry="2.600" fill="#3a3a3a" />
      </svg>
    </span>
  );
}

function WhatsApp() {
  return (
    <span className="relative">
      <span className={`${tile} bg-gradient-to-b from-[#86ea71] to-[#4fbf35]`}><FaWhatsapp className="size-[55px] text-white" /></span>
      <Badge>20</Badge>
    </span>
  );
}

function Folder() {
  return (
    <svg width="66" height="70" viewBox="0 0 66 70">
      <rect x="13" y="0" width="40" height="30" fill="#e9e9e9" /><rect x="13" y="1" width="40" height="3" fill="#b98d8b" />
      <path d="M17 8h12M17 12h12M17 16h12M17 20h12M33 8h16M33 12h16M33 16h16M33 20h10" stroke="#a8a8a8" strokeWidth="1.400" />
      <path d="M0 20q0-4 4-4h15l6 6h37q4 0 4 4v39q0 4-4 4H4q-4 0-4-4z" fill="#4a9fd8" />
      <path d="M0 30q0-4 4-4h58q4 0 4 4v35q0 4-4 4H4q-4 0-4-4z" fill="#7ccbfb" />
      <path d="M0 63h66v2q0 4-4 4H4q-4 0-4-4z" fill="#57abe2" />
    </svg>
  );
}

function Trash() {
  return (
    <svg width="56" height="72" viewBox="0 0 56 72">
      <defs><linearGradient id="tr"><stop offset="0" stopColor="#5c6063" /><stop offset=".25" stopColor="#8b8f92" /><stop offset=".6" stopColor="#6a6e71" /><stop offset="1" stopColor="#4c5053" /></linearGradient></defs>
      <ellipse cx="28" cy="12" rx="27" ry="5" fill="#3d3f41" />
      <path d="M4 13l6-9 6 5 5-8 6 7 7-7 6 6 6-3 6 9-7 4H10z" fill="#eceded" />
      <path d="M10 9l4 5M21 5l1 8M32 6l4 7M44 7l-3 6" stroke="#55585b" strokeWidth="1.600" /><circle cx="22" cy="11" r="2" fill="#3aa5c4" /><circle cx="37" cy="10" r="2" fill="#c0552e" />
      <path d="M1 11q5 6 27 6t27-6l-6 53q-1 7-21 7T7 64z" fill="url(#tr)" />
      <path d="M1 11q5 6 27 6t27-6" fill="none" stroke="#aeb1b3" strokeWidth="1.600" />
    </svg>
  );
}

function Cell({ dot, children }: { dot?: boolean; children: React.ReactNode }) {
  return (
    <div className="flex w-[82px] flex-col items-center">
      <div className="flex h-[90px] w-full items-center justify-center">{children}</div>
      {dot && <span className="-mt-[4px] size-[8px] shrink-0 rounded-full bg-[#d8ae8e]" />}
    </div>
  );
}

function Sep() {
  return <div className="flex w-[36px] justify-center pt-[12px]"><span className="h-[72px] w-[2px] bg-[#a07f5f]/80" /></div>;
}

function Dock() {
  return (
    <div className="absolute top-[1690px] left-[742px] flex h-[100px] w-[1396px] rounded-[32px] border-2 border-[#73573c] bg-gradient-to-r from-[#4a2b14] via-[#5f3a14] via-60% to-[#4d2c12] pl-[4px] shadow-[0_0_0_1px_rgba(30,14,2,0.7),0_0_80px_rgba(0,0,0,0.32)]">
      <Cell dot><Finder /></Cell>
      <Cell><Launchpad /></Cell>
      <Cell dot><Messages /></Cell>
      <Cell dot><BraveApp /></Cell>
      <Cell><AppStore /></Cell>
      <Cell><Maps /></Cell>
      <Cell><Screenshot /></Cell>
      <Cell><Photos /></Cell>
      <Cell><FaceTime /></Cell>
      <Cell><Settings /></Cell>
      <Sep />
      <Cell dot><Excel /></Cell>
      <Cell dot><VSCode /></Cell>
      <Cell><Preview /></Cell>
      <Cell dot><WhatsApp /></Cell>
      <Sep />
      <Cell><Folder /></Cell>
      <Cell><Trash /></Cell>
    </div>
  );
}

export default function App() {
  return (
    <div className="relative flex h-[1800px] w-[2880px] flex-col overflow-hidden bg-[#3a1f06]">
      <Wallpaper />
      <MenuBar />
      <div className="relative mt-[1px] flex h-[1639px] shrink-0 flex-col overflow-hidden rounded-[20px] bg-white shadow-[0_0_0_1px_#000]">
        <TabStrip />
        <Toolbar />
        <div className="flex min-h-0 flex-1 overflow-hidden bg-white">
          <div className="w-[398px] shrink-0 pt-[9px] pl-[22px]">
            <svg width="46" height="47" viewBox="0 0 46 47"><circle cx="23" cy="23.500" r="23" fill="#e1e5eb" /><path d="M23 38V13M10.500 24.500L23 12l12.500 12.500" fill="none" stroke="#fff" strokeWidth="8" strokeLinejoin="round" /></svg>
          </div>
          <Problem />
          <Sidebar />
        </div>
        <div className="pointer-events-none absolute inset-x-0 top-0 h-[151px] rounded-t-[20px] border-x-2 border-t-2 border-white/30" />
      </div>
      <Dock />
    </div>
  );
}
